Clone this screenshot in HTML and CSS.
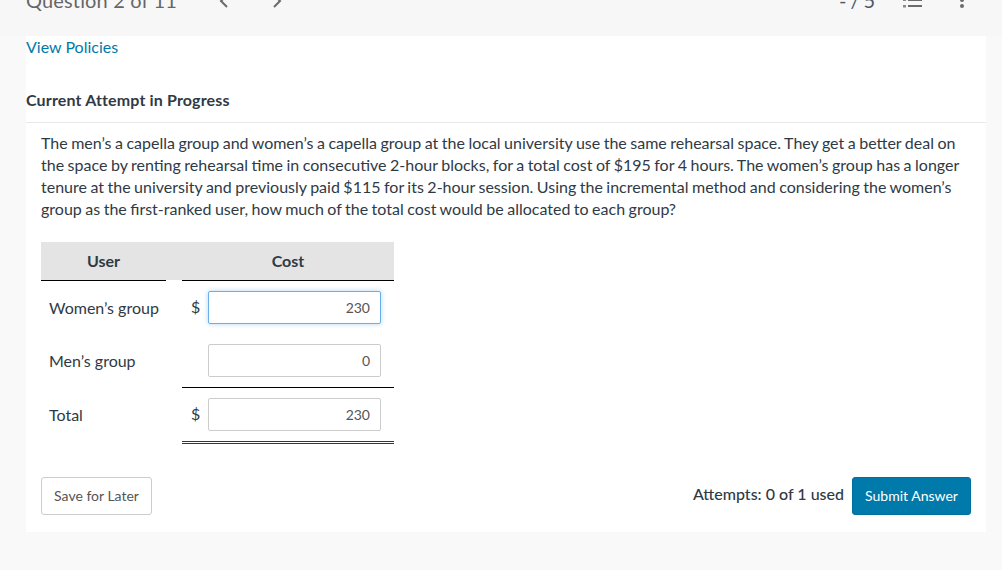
FILE: index.html
```html
<!DOCTYPE html>
<html lang="en">
<head>
    <meta charset="UTF-8">
    <meta name="viewport" content="width=device-width, initial-scale=1.0">
    <title>Question 2 of 11</title>
    <link rel="stylesheet" href="styles.css">
</head>
<body>
    <div class="topbar">
        <div class="topbar-left">
            <span class="question-title">Question 2 of 11</span>
            <svg class="nav-arrow nav-prev" width="10" height="8" viewBox="0 0 10 8"><path d="M8 -5 L2 1 L8 7" fill="none" stroke="#6b6b6b" stroke-width="2"/></svg>
            <svg class="nav-arrow nav-next" width="10" height="8" viewBox="0 0 10 8"><path d="M2 -5 L8 1 L2 7" fill="none" stroke="#6b6b6b" stroke-width="2"/></svg>
        </div>
        <div class="topbar-right">
            <span class="score">-/5</span>
            <svg class="list-icon" width="20" height="9" viewBox="0 0 20 9">
                <rect x="5" y="0" width="14" height="2" fill="#6b6b6b"/>
                <rect x="5" y="6" width="14" height="2" fill="#6b6b6b"/>
                <rect x="0" y="0" width="3" height="2" fill="#8a8a8a"/>
                <rect x="0" y="6" width="3" height="2.5" fill="#8a8a8a"/>
            </svg>
            <svg class="more-icon" width="6" height="9" viewBox="0 0 6 9">
                <circle cx="3" cy="1" r="2" fill="#6b6b6b"/>
                <circle cx="3" cy="7" r="2" fill="#6b6b6b"/>
            </svg>
        </div>
    </div>

    <div class="card">
        <a class="policies" href="#">View Policies</a>
        <h2 class="attempt-title">Current Attempt in Progress</h2>

        <div class="question">
            <p>The men’s a capella group and women’s a capella group at the local university use the same rehearsal space. They get a better deal on the space by renting rehearsal time in consecutive 2-hour blocks, for a total cost of $195 for 4 hours. The women’s group has a longer tenure at the university and previously paid $115 for its 2-hour session. Using the incremental method and considering the women’s group as the first-ranked user, how much of the total cost would be allocated to each group?</p>

            <div class="cost-table">
                <div class="head head-user">User</div>
                <div class="head head-cost">Cost</div>

                <div class="label row-first">Women’s group</div>
                <div class="cost-cell row-first">
                    <span class="dollar">$</span>
                    <input class="amount amount-focus" type="text" value="230">
                </div>

                <div class="label row-second">Men’s group</div>
                <div class="cost-cell row-second line-below">
                    <span class="dollar"></span>
                    <input class="amount" type="text" value="0">
                </div>

                <div class="label row-total">Total</div>
                <div class="cost-cell row-total double-below">
                    <span class="dollar">$</span>
                    <input class="amount" type="text" value="230">
                </div>
            </div>

            <div class="actions">
                <button class="btn-save">Save for Later</button>
                <div class="submit-group">
                    <span class="attempts">Attempts: 0 of 1 used</span>
                    <button class="btn-submit">Submit Answer</button>
                </div>
            </div>
        </div>
    </div>
</body>
</html>
```

FILE: styles.css
```css
* {
    box-sizing: border-box;
}
body {
    margin: 0;
    height: 570px;
    overflow: hidden;
    font-family: Lato, "Open Sans", sans-serif;
    font-size: 16px;
    color: #2f3a45;
    background: #f9f9f9;
}
.topbar {
    height: 36px;
    padding: 0 37px 0 26px;
    background: #f7f7f7;
    display: flex;
    justify-content: space-between;
    overflow: hidden;
}
.topbar-left, .topbar-right {
    height: 8px;
    display: flex;
    align-items: flex-end;
}
.question-title {
    font-size: 20px;
    line-height: 24px;
    letter-spacing: 0.15px;
    flex: none;
    margin-bottom: -4px;
    width: 193px;
    color: #666;
}
.nav-next {
    margin-left: 43px;
}
.score {
    font-size: 20px;
    line-height: 24px;
    letter-spacing: 4px;
    flex: none;
    margin-bottom: -4px;
    width: 64px;
    color: #4d5a66;
}
.more-icon {
    margin-left: 36px;
}
.card {
    width: 960px;
    height: 496px;
    margin-left: 26px;
    background: #fff;
}
.policies {
    display: block;
    height: 22px;
    line-height: 22px;
    color: #007aaa;
    text-decoration: none;
}
.attempt-title {
    margin: 0;
    padding: 31px 0 11px;
    height: 65px;
    font-size: 16px;
    line-height: 22px;
    font-weight: 700;
    letter-spacing: 0.15px;
    border-bottom: 1px solid #e8e8e8;
}
.question {
    padding: 9px 15px 0;
}
.question p {
    margin: 0 0 22px;
    line-height: 22px;
    word-spacing: -0.6px;
}
.cost-table {
    width: 353px;
    display: grid;
    grid-template-columns: 125px 16px 212px;
    grid-template-rows: 39px 53px 54px 56px;
}
.head {
    background: #e4e4e4;
    font-weight: 700;
    text-align: center;
    line-height: 38px;
    color: #2f3a45;
    border-bottom: 1px solid #000;
}
.head-user {
    grid-column: 1;
}
.head-cost {
    grid-column: 3;
    position: relative;
}
.head-cost::before {
    content: "";
    position: absolute;
    left: -16px;
    top: 0;
    width: 16px;
    height: 38px;
    background: #e4e4e4;
}
.label {
    grid-column: 1;
    padding: 10px 0 0 8px;
    line-height: 34px;
}
.row-first {
    grid-row: 2;
}
.row-second {
    grid-row: 3;
}
.row-total {
    grid-row: 4;
}
.cost-cell {
    grid-column: 3;
    display: flex;
    padding-top: 10px;
}
.dollar {
    width: 26px;
    line-height: 32px;
    padding-left: 9px;
    flex: none;
}
.amount {
    width: 173px;
    height: 33px;
    padding: 0 10px;
    border: 1px solid #ccc;
    border-radius: 2px;
    font-family: Lato, "Open Sans", sans-serif;
    font-size: 14px;
    color: #555;
    text-align: right;
    background: #fff;
}
.amount-focus {
    border-color: #66afe9;
    box-shadow: 0 0 5px rgba(102, 175, 233, 0.5);
}
.line-below {
    border-bottom: 1px solid #000;
}
.double-below {
    border-bottom: 3px double #2f3a45;
}
.actions {
    margin-top: 33px;
    display: flex;
    justify-content: space-between;
}
.submit-group {
    display: flex;
    gap: 8px;
}
.attempts {
    font-weight: 500;
    line-height: 34px;
}
.btn-save, .btn-submit {
    height: 38px;
    padding: 0 0 2px;
    border-radius: 3px;
    font-family: Lato, "Open Sans", sans-serif;
    font-size: 14px;
    cursor: pointer;
}
.btn-save {
    width: 111px;
    background: #fff;
    color: #555;
    border: 1px solid #ccc;
}
.btn-submit {
    width: 119px;
    background: #0079ab;
    color: #fff;
    border: 1px solid #006f9c;
}
```
